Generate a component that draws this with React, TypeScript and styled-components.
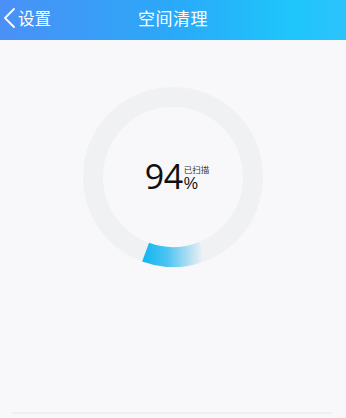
import * as React from 'react'
import styled, { createGlobalStyle } from 'styled-components'

const GlobalStyle = createGlobalStyle`
  html, body {
    margin: 0;
    padding: 0;
    background: #f8f8fa;
    font-family: "Noto Sans CJK SC", "Noto Sans", sans-serif;
  }
`

const Page = styled.div`
  width: 346px;
  height: 418px;
  display: flex;
  flex-direction: column;
  background: #f8f8fa;
  overflow: hidden;
`

const Header = styled.div`
  height: 40px;
  flex-shrink: 0;
  position: relative;
  display: flex;
  align-items: center;
  justify-content: center;
  background: linear-gradient(90deg, #4b90f6 0%, #2aa9f8 50%, #1ec6fb 85%, #2cc3fb 100%);
  color: #fff;
`

const Back = styled.div`
  position: absolute;
  left: 2px;
  top: 0;
  height: 36px;
  display: flex;
  align-items: center;
  gap: 2px;
  font-size: 16.5px;
`

const Title = styled.div`
  font-size: 17px;
  letter-spacing: 0.5px;
  margin-top: -6px;
`

const Body = styled.div`
  flex: 1;
  display: flex;
  flex-direction: column;
  align-items: center;
  padding-top: 47px;
`

const Ring = styled.div`
  position: relative;
  width: 180px;
  height: 180px;
  margin-left: -1px;
`

const Center = styled.div`
  position: absolute;
  inset: 0;
  display: flex;
  align-items: center;
  justify-content: center;
  padding-left: 9px;
  padding-bottom: 2px;
  box-sizing: border-box;
`

const Readout = styled.div`
  font-size: 0;
  white-space: nowrap;
`

const Number = styled.span`
  font-family: "Open Sans", "Noto Sans", sans-serif;
  font-weight: 400;
  font-size: 34px;
  line-height: 1;
  color: #111;
  letter-spacing: -0.5px;
`

const Side = styled.span`
  display: inline-block;
  margin-left: 1px;
`

const Label = styled.span`
  display: block;
  font-size: 8.5px;
  line-height: 10px;
  color: #333;
  margin-bottom: 2px;
`

const Percent = styled.span`
  display: block;
  font-family: "Liberation Sans", Arial, sans-serif;
  font-size: 16px;
  color: #111;
  line-height: 16px;
`

const Spacer = styled.div`
  flex: 1;
`

const Divider = styled.div`
  width: 320px;
  height: 2px;
  background: #eeeff2;
  margin-bottom: 4px;
  margin-left: -2px;
`

export default function App() {
  return (
    <>
      <GlobalStyle />
      <Page>
        <Header>
          <Back>
            <svg width="14" height="22" viewBox="0 0 14 22">
              <path d="M12 2 L3 11 L12 20" fill="none" stroke="#fff" strokeWidth="1.8" strokeLinecap="round" strokeLinejoin="round" />
            </svg>
            <span style={{ marginTop: -1 }}>设置</span>
          </Back>
          <Title>空间清理</Title>
        </Header>
        <Body>
          <Ring>
            <svg width="180" height="180" viewBox="0 0 180 180">
              <defs>
                <linearGradient id="arc" gradientUnits="userSpaceOnUse" x1="60" y1="0" x2="120" y2="0">
                  <stop offset="0" stopColor="#10b6f0" />
                  <stop offset="0.4" stopColor="#4cc4f2" />
                  <stop offset="1" stopColor="#f0f1f3" />
                </linearGradient>
              </defs>
              <circle cx="90" cy="90" r="80" fill="none" stroke="#f0f1f3" strokeWidth="20" />
              <path d="M 62.6 165.2 A 80 80 0 0 0 120 164.2" fill="none" stroke="url(#arc)" strokeWidth="20" />
            </svg>
            <Center>
              <Readout>
                <Number>94</Number>
                <Side>
                  <Label>已扫描</Label>
                  <Percent>%</Percent>
                </Side>
              </Readout>
            </Center>
          </Ring>
          <Spacer />
          <Divider />
        </Body>
      </Page>
    </>
  )
}
